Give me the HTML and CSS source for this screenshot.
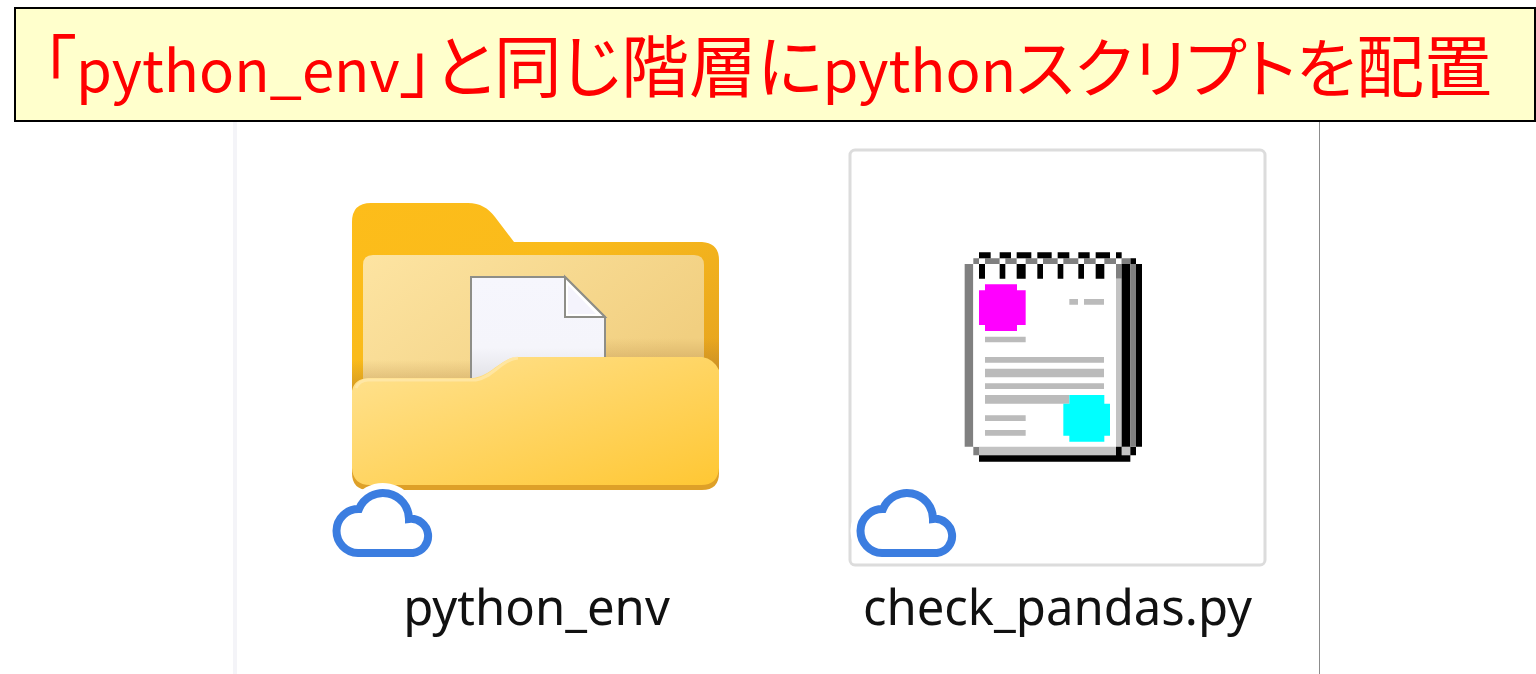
FILE: index.html
```html
<!DOCTYPE html>
<html lang="ja">
<head>
<meta charset="utf-8">
<meta name="viewport" content="width=device-width, initial-scale=1">
<title>python_env</title>
<link rel="stylesheet" href="styles.css">
</head>
<body>
<h1 class="banner">「<span class="latin">python_env</span>」と同じ階層に<span class="latin">python</span><span class="kana">スクリプトを</span>配置</h1>
<main class="explorer">
  <figure class="item">
    <svg class="thumb" viewBox="327 148 419 419" aria-hidden="true">
      <defs>
        <linearGradient id="back" x1="0" y1="0" x2="1" y2="1"><stop offset="0" stop-color="#fdbd1a"/><stop offset=".4" stop-color="#fabb1b"/><stop offset="1" stop-color="#e3a020"/></linearGradient>
        <linearGradient id="inner" x1="0" y1="0" x2="1" y2=".5"><stop offset="0" stop-color="#fde4a2"/><stop offset="1" stop-color="#f1cf80"/></linearGradient>
        <linearGradient id="shade" x1="0" y1="0" x2="0" y2="1"><stop offset="0" stop-color="#a07030" stop-opacity="0"/><stop offset="1" stop-color="#a07030" stop-opacity=".4"/></linearGradient>
        <linearGradient id="pocket" gradientUnits="userSpaceOnUse" x1="460" y1="345" x2="530" y2="550"><stop offset="0" stop-color="#ffe08a"/><stop offset="1" stop-color="#ffc733"/></linearGradient>
        <linearGradient id="paper" x1="0" y1="0" x2="0" y2="1"><stop offset="0" stop-color="#f6f6fd"/><stop offset=".65" stop-color="#f5f5fb"/><stop offset="1" stop-color="#dfdfe3"/></linearGradient>
      </defs>
      <path fill="url(#back)" d="M352 222Q352 203 371 203H468C480 203 488 208 495 217L514 242H702Q719 243 719 260V400H352Z"/>
      <path fill="url(#inner)" d="M363 265Q363 255 373 255H694Q704 255 704 265V390H363Z"/>
      <path fill="url(#shade)" d="M352 360H471V390H352Z"/>
      <path fill="url(#shade)" d="M605 338H719V372H605Z"/>
      <path fill="url(#paper)" stroke="#8e8e88" stroke-width="2" d="M471 385V277H565L605 317V385Z"/>
      <path fill="#fff" stroke="#8e8e88" stroke-width="2" d="M565 277V317H605Z"/>
      <path fill="#f4f3fc" d="M568 285V314H596Z"/>
      <path fill="#dea028" d="M352 440H719V473Q719 490 702 490H369Q352 490 352 473Z"/>
      <path fill="url(#pocket)" d="M352 391Q354 379 368 378H472C491 377 501 357 518 357H702Q714 359 719 370V468Q718 485 701 485H370Q353 485 352 468Z"/>
      <path fill="none" stroke="#ffe9b0" stroke-width="3" opacity=".7" d="M356 388Q360 379 370 380H476C492 378 502 359 518 358"/>
      <path class="cloud-halo" d="M358 553A21 21 0 0 1 359 509A26 26 0 0 1 409 519A17 17 0 0 1 413 553Z"/>
      <path class="cloud" d="M358 553A21 21 0 0 1 359 509A26 26 0 0 1 409 519A17 17 0 0 1 413 553Z"/>
    </svg>
    <figcaption class="name">python_env</figcaption>
  </figure>
  <figure class="item">
    <svg class="thumb" viewBox="848 148 419 419" aria-hidden="true">
      <rect x="850" y="150" width="415" height="415" rx="5" fill="#fff" stroke="#dcdcdc" stroke-width="3"/>
      <g transform="translate(840 140) scale(.33333)">
        <path fill="#808080" d="M374 372H400V920H374ZM400 355H845V372H400ZM400 920H417V946H400ZM828 372H845V416H828Z"/>
        <path fill="#fff" d="M400 372H828V920H400ZM417 355H435V372H417ZM479 355H496V372H479ZM530 355H557V372H530ZM592 355H609V372H592ZM653 355H670V372H653ZM715 355H732V372H715ZM767 355H793V372H767ZM828 355H845V372H828Z"/>
        <path fill="#c3c3c3" d="M828 416H845V920H828ZM417 920H828V946H417ZM845 920H871V946H845Z"/>
        <path fill="#000" d="M417 337H452V355H417ZM479 337H513V355H479ZM530 337H574V355H530ZM592 337H635V355H592ZM653 337H688V355H653ZM715 337H749V355H715ZM767 337H810V355H767ZM828 337H845V355H828ZM417 372H435V416H417ZM479 372H496V416H479ZM530 372H557V416H530ZM592 372H609V416H592ZM653 372H670V416H653ZM715 372H732V416H715ZM767 372H793V416H767ZM845 372H871V920H845ZM871 355H888V372H871ZM888 372H906V920H888ZM828 920H845V946H828ZM871 920H888V946H871ZM417 946H871V965H417Z"/>
        <path fill="#808080" d="M845 355H871V372H845ZM871 372H888V920H871Z"/>
        <path fill="#bbb" d="M688 477H714V494H688ZM732 477H792V494H732ZM435 590H557V607H435ZM435 651H792V668H435ZM435 686H792V712H435ZM435 730H792V747H435ZM435 765H688V791H435ZM435 826H557V843H435ZM435 870H557V887H435Z"/>
        <path fill="#f0f" d="M435 433H531V451H557V555H531V573H435V555H417V451H435Z"/>
        <path fill="#0ff" d="M688 765H793V791H810V887H793V905H688V887H670V791H688Z"/>
      </g>
      <path class="cloud-halo" d="M882 553A21 21 0 0 1 883 509A26 26 0 0 1 933 519A17 17 0 0 1 937 553Z"/>
      <path class="cloud" d="M882 553A21 21 0 0 1 883 509A26 26 0 0 1 933 519A17 17 0 0 1 937 553Z"/>
    </svg>
    <figcaption class="name">check_pandas.py</figcaption>
  </figure>
</main>
</body>
</html>
```
FILE: styles.css
```css
* {
  box-sizing: border-box;
}

body {
  margin: 0;
  min-height: 100vh;
  display: flex;
  flex-direction: column;
  background: #fff;
}

.banner {
  margin: 7px 0 0 14px;
  padding: 8px 0 11px 26px;
  border: 2px solid #000;
  background: #ffc;
  color: #f00;
  font-family: "Noto Sans CJK JP", sans-serif;
  font-size: 68px;
  font-weight: 400;
  line-height: 92px;
  white-space: nowrap;
  font-feature-settings: "palt";
}

.latin {
  font-size: 58px;
  line-height: 1;
}

.kana {
  font-size: 65px;
  line-height: 1;
}

.explorer {
  flex: 1;
  display: flex;
  gap: 102px;
  margin: 0 216px 0 233px;
  padding: 26px 52px 0 90px;
  border-left: 4px solid #f4f4f8;
  border-right: 1px solid #8c8c8c;
}

.item {
  flex: 1;
  margin: 0;
  text-align: center;
}

.thumb {
  display: block;
  width: 100%;
  height: auto;
}

.cloud {
  fill: #fff;
  stroke: #3b7de0;
  stroke-width: 8;
}

.cloud-halo {
  fill: #fff;
  stroke: #fff;
  stroke-width: 20;
}

.name {
  color: #111;
  font-family: "Noto Sans", sans-serif;
  font-size: 49px;
  line-height: 78px;
  white-space: nowrap;
}
```
